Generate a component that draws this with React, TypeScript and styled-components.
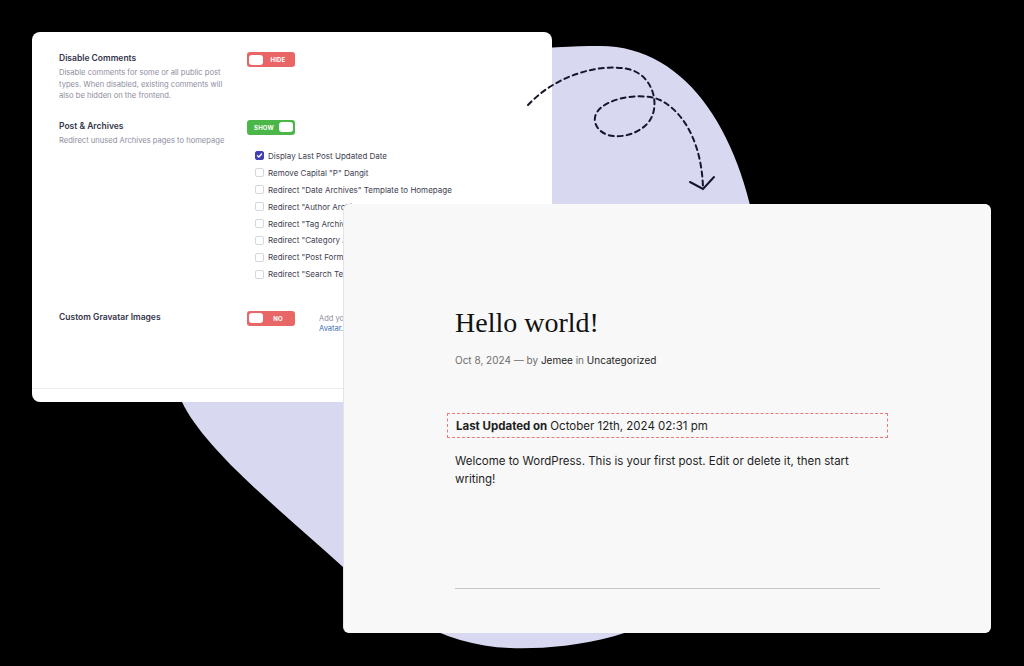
import React from 'react';
import styled, { createGlobalStyle } from 'styled-components';

const GlobalStyle = createGlobalStyle`
  html, body {
    margin: 0;
    padding: 0;
    background: #000;
  }
  body {
    font-family: Inter, "Noto Sans", sans-serif;
  }
`;

const Stage = styled.div`
  position: relative;
  width: 1024px;
  height: 666px;
  overflow: hidden;
  background: #000;
`;

const Layer = styled.svg<{ $z: number }>`
  position: absolute;
  left: 0;
  top: 0;
  z-index: ${(p) => p.$z};
  pointer-events: none;
`;

/* settings window */

const SettingsCard = styled.section`
  position: absolute;
  left: 32px;
  top: 32px;
  z-index: 1;
  width: 520px;
  height: 370px;
  background: #fff;
  border-radius: 8px;
  display: flex;
  flex-direction: column;
  overflow: hidden;
`;

const SettingsBody = styled.div`
  flex: 1;
  padding: 20px 0 0 27px;
`;

const SettingsFooter = styled.div`
  height: 13px;
  border-top: 1px solid #ededf0;
`;

const SettingRow = styled.div<{ $gap: number }>`
  display: grid;
  grid-template-columns: 188px 1fr;
  margin-bottom: ${(p) => p.$gap}px;
`;

const SettingTitle = styled.h3`
  margin: 0;
  font-size: 8.5px;
  font-weight: 600;
  line-height: 12px;
  color: #34344a;
`;

const SettingDesc = styled.p`
  margin: 3px 0 0;
  font-size: 7.6px;
  line-height: 11.5px;
  color: #8e8e9e;
  white-space: nowrap;
`;

const Controls = styled.div<{ $row?: boolean }>`
  display: flex;
  flex-direction: ${(p) => (p.$row ? 'row' : 'column')};
  align-items: flex-start;
  gap: ${(p) => (p.$row ? '24px' : '0')};
`;

const Toggle = styled.div<{ $on: boolean }>`
  width: 48px;
  height: 15px;
  flex-shrink: 0;
  box-sizing: border-box;
  padding: 0 2px;
  border-radius: 3px;
  background: ${(p) => (p.$on ? '#4bb748' : '#e86666')};
  display: flex;
  flex-direction: ${(p) => (p.$on ? 'row-reverse' : 'row')};
  align-items: center;
`;

const Knob = styled.span`
  width: 14px;
  height: 10px;
  border-radius: 3px;
  background: #fff;
`;

const ToggleText = styled.span`
  flex: 1;
  text-align: center;
  font-size: 6px;
  font-weight: 700;
  letter-spacing: 0.2px;
  color: #fff;
`;

const OptionList = styled.ul`
  list-style: none;
  margin: 13px 0 0 8px;
  padding: 0;
`;

const Option = styled.li`
  display: flex;
  align-items: center;
  gap: 4px;
  height: 16.9px;
  font-size: 8px;
  color: #3e3e50;
  white-space: nowrap;
`;

const Box = styled.span<{ $checked?: boolean }>`
  width: 9px;
  height: 9px;
  box-sizing: border-box;
  border-radius: 2px;
  border: 1px solid ${(p) => (p.$checked ? '#4141b5' : '#d6d6de')};
  background: ${(p) => (p.$checked ? '#4141b5' : '#fff')};
  display: flex;
  align-items: center;
  justify-content: center;
`;

/* the rest of this hint sits under the preview window */
const Hint = styled.p`
  margin: 3px 0 0;
  width: 25px;
  overflow: hidden;
  font-size: 7.5px;
  line-height: 10.5px;
  color: #8e8e9e;
  white-space: nowrap;
`;

const HintLink = styled.a`
  color: #3a6db3;
  text-decoration: none;
`;

/* post preview window */

const PostCard = styled.article`
  position: absolute;
  left: 344px;
  top: 204px;
  z-index: 3;
  width: 647px;
  height: 429px;
  box-sizing: border-box;
  padding: 102px 0 0 111px;
  background: #f8f8f8;
  border-radius: 6px;
  box-shadow: -1px 0 0 #e4e4e8;
`;

const PostColumn = styled.div`
  width: 425px;
`;

const PostTitle = styled.h1`
  margin: 0;
  font-family: "Liberation Serif", serif;
  font-weight: 400;
  font-size: 28px;
  line-height: 34px;
  color: #111;
`;

const Meta = styled.div`
  margin-top: 13px;
  font-size: 10px;
  line-height: 14px;
  color: #6e6e6e;
`;

const MetaLink = styled.span`
  color: #1e1e1e;
`;

const Updated = styled.div`
  margin: 46px -8px 0;
  height: 25px;
  box-sizing: border-box;
  padding: 0 8px;
  display: flex;
  align-items: center;
  border: 1px dashed #ea7b7b;
  font-size: 11.5px;
  color: #1e1e1e;
  white-space: nowrap;

  b {
    font-weight: 700;
    margin-right: 3px;
  }
`;

const Body = styled.p`
  margin: 15px 0 0;
  font-size: 11.5px;
  line-height: 17.5px;
  color: #1e1e1e;
`;

const Separator = styled.hr`
  margin: 100px 0 0;
  border: 0;
  border-top: 1px solid #c6c6c6;
`;

const Check = () => (
  <svg width="7" height="7" viewBox="0 0 10 10">
    <path d="M2 5.2l2 2 4-4.4" fill="none" stroke="#fff" strokeWidth="1.8" strokeLinecap="round" strokeLinejoin="round" />
  </svg>
);

const options = [
  { label: 'Display Last Post Updated Date', checked: true },
  { label: 'Remove Capital "P" Dangit' },
  { label: 'Redirect "Date Archives" Template to Homepage' },
  { label: 'Redirect "Author Archives" Template to Homepage' },
  { label: 'Redirect "Tag Archives" Template to Homepage' },
  { label: 'Redirect "Category Archives" Template to Homepage' },
  { label: 'Redirect "Post Format Archives" Template to Homepage' },
  { label: 'Redirect "Search Template" to Homepage' },
];

const App: React.FC = () => (
  <Stage>
    <GlobalStyle />
    <Layer $z={0} width="1024" height="666" viewBox="0 0 1024 666">
      <path
        d="M600 46 C690 46 746 140 760 260 C775 380 760 520 700 590 C650 640 560 650 510 648 C440 646 385 606 343 567 C280 510 205 450 182 402 C150 330 180 210 300 120 C390 60 520 46 600 46 Z"
        fill="#d8d8f1"
      />
    </Layer>

    <SettingsCard>
      <SettingsBody>
        <SettingRow $gap={18}>
          <div>
            <SettingTitle>Disable Comments</SettingTitle>
            <SettingDesc>
              Disable comments for some or all public post
              <br />
              types. When disabled, existing comments will
              <br />
              also be hidden on the frontend.
            </SettingDesc>
          </div>
          <Controls>
            <Toggle $on={false}>
              <Knob />
              <ToggleText>HIDE</ToggleText>
            </Toggle>
          </Controls>
        </SettingRow>

        <SettingRow $gap={28}>
          <div>
            <SettingTitle>Post &amp; Archives</SettingTitle>
            <SettingDesc>Redirect unused Archives pages to homepage</SettingDesc>
          </div>
          <Controls>
            <Toggle $on>
              <Knob />
              <ToggleText>SHOW</ToggleText>
            </Toggle>
            <OptionList>
              {options.map((o) => (
                <Option key={o.label}>
                  <Box $checked={o.checked}>{o.checked && <Check />}</Box>
                  {o.label}
                </Option>
              ))}
            </OptionList>
          </Controls>
        </SettingRow>

        <SettingRow $gap={0}>
          <div>
            <SettingTitle>Custom Gravatar Images</SettingTitle>
          </div>
          <Controls $row>
            <Toggle $on={false}>
              <Knob />
              <ToggleText>NO</ToggleText>
            </Toggle>
            <Hint>
              Add your own
              <br />
              <HintLink href="#">Avatar.</HintLink>
            </Hint>
          </Controls>
        </SettingRow>
      </SettingsBody>
      <SettingsFooter />
    </SettingsCard>

    <Layer $z={2} width="1024" height="666" viewBox="0 0 1024 666">
      <g fill="none" stroke="#16162a" strokeWidth="2" strokeLinecap="round">
        <path
          d="M528 105 C555 76 598 63 628 69 C655 75 662 110 646 125 C630 140 600 141 595 122 C591 101 638 90 660 100 C688 114 702 150 703 188"
          strokeDasharray="5 4"
        />
        <path d="M690 182 L703 189 L714 177" />
      </g>
    </Layer>

    <PostCard>
      <PostColumn>
        <PostTitle>Hello world!</PostTitle>
        <Meta>
          Oct 8, 2024 — by <MetaLink>Jemee</MetaLink> in <MetaLink>Uncategorized</MetaLink>
        </Meta>
        <Updated>
          <b>Last Updated on</b> October 12th, 2024 02:31 pm
        </Updated>
        <Body>
          Welcome to WordPress. This is your first post. Edit or delete it, then start writing!
        </Body>
        <Separator />
      </PostColumn>
    </PostCard>
  </Stage>
);

export default App;
